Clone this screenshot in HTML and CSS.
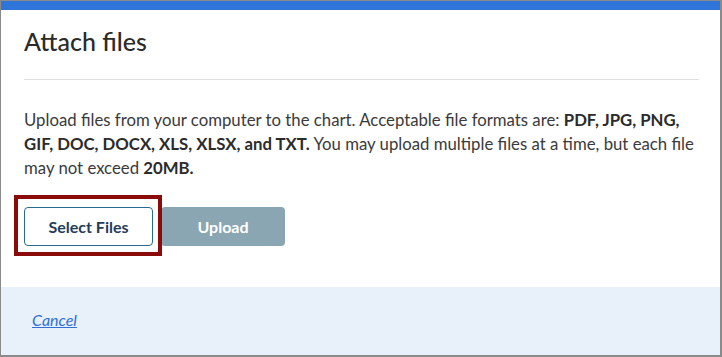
FILE: index.html
```html
<!DOCTYPE html>
<html>
<head>
    <title>Attach files</title>
    <link rel="stylesheet" href="styles.css">
</head>
<body>
    <div class="modal">
        <div class="modal-header">
            <h2 class="modal-title">Attach files</h2>
        </div>

        <div class="modal-body">
            <p class="upload-text">
                Upload files from your computer to the chart. Acceptable file formats are:
                <strong>PDF, JPG, PNG, GIF, DOC, DOCX, XLS, XLSX, and TXT.</strong>
                You may upload multiple files at a time, but each file may not exceed
                <strong>20MB.</strong>
            </p>

            <div class="button-row">
                <span class="focus-ring">
                    <button class="btn btn-outline" type="button">Select Files</button>
                </span>
                <button class="btn btn-disabled" type="button" disabled>Upload</button>
            </div>
        </div>

        <div class="modal-footer">
            <a href="#" class="cancel-link">Cancel</a>
        </div>
    </div>
</body>
</html>
```

FILE: styles.css
```css
body {
    margin: 0;
    padding: 1px 2px 2px 1px;
    background-color: #8a8a8a;
    font-family: Lato, "Open Sans", sans-serif;
    color: #333;
    height: 100vh;
    box-sizing: border-box;
    overflow: hidden;
}

.modal {
    background-color: #fff;
    border-top: 9px solid #2f74d9;
    height: 100%;
    box-sizing: border-box;
    display: flex;
    flex-direction: column;
}

.modal-header {
    margin: 0 21px 0 23px;
    padding: 16px 0 22px;
    border-bottom: 1px solid #e0e0e0;
}

.modal-title {
    margin: 0;
    font-size: 25px;
    font-weight: 500;
    line-height: 31px;
    color: #2b2b2b;
}

.modal-body {
    padding: 28px 21px 0 23px;
    flex: 1;
}

.upload-text {
    margin: 0;
    font-size: 16.75px;
    line-height: 24px;
    color: #3a3a3a;
}

.upload-text strong {
    color: #2b2b2b;
}

.button-row {
    display: flex;
    align-items: center;
    gap: 8px;
    margin-top: 27px;
}

/* square keyboard-focus ring drawn over the neighbours */
.focus-ring {
    display: flex;
    position: relative;
    z-index: 1;
    border: 4px solid #8b0a0a;
    padding: 8px 5px 6px 6px;
    margin: -12px -9px -10px -10px;
}

.btn {
    height: 39px;
    border-radius: 4px;
    font-family: Lato, "Open Sans", sans-serif;
    font-size: 16px;
    font-weight: bold;
    padding: 0;
}

.btn-outline {
    width: 129px;
    background-color: #fff;
    border: 1px solid #2a6a8f;
    color: #1f3d5a;
}

.btn-disabled {
    width: 124px;
    background-color: #8aa6b3;
    border: none;
    color: #fff;
}

.modal-footer {
    background-color: #e8f0fa;
    padding: 21px 31px 23px;
}

.cancel-link {
    font-size: 16px;
    line-height: 24px;
    font-style: italic;
    color: #2f6fd6;
    text-decoration: underline;
}
```
